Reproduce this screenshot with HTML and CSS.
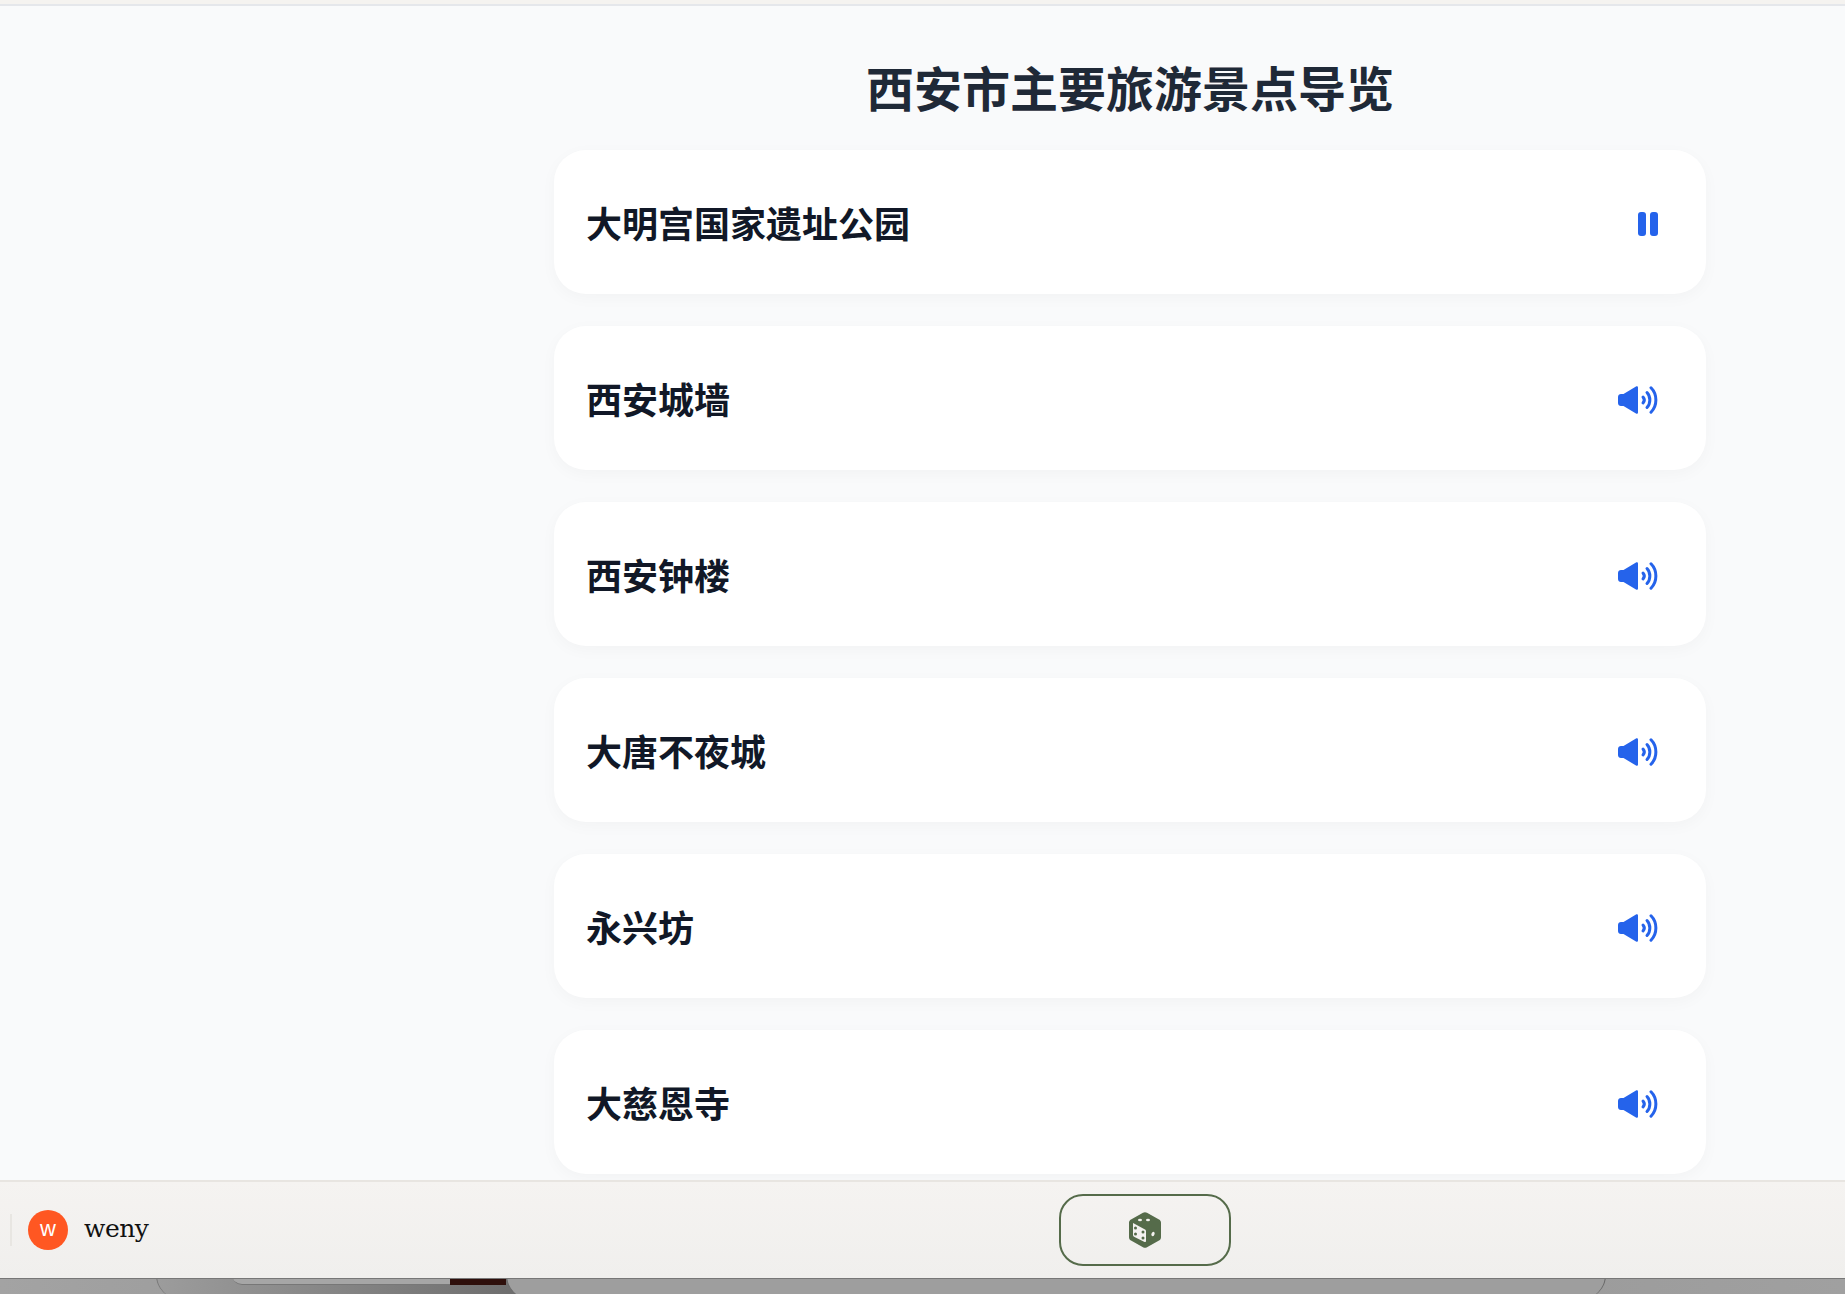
FILE: index.html
```html
<!DOCTYPE html>
<html lang="zh-CN">

<head>
    <meta charset="UTF-8">
    <title>西安市主要旅游景点导览</title>
    <link rel="stylesheet" href="styles.css">
</head>

<body>
<svg class="icon-defs" aria-hidden="true">
    <symbol id="speaker" viewBox="0 0 40 28">
        <path d="M3 8h2.500L18 .5c.9-.6 2-.1 2 1v25c0 1.100-1.100 1.600-2 1L5.500 20H3c-1.700 0-3-1.300-3-3v-6c0-1.700 1.300-3 3-3z" fill="currentColor"/>
        <path d="M25 11c1.600 1.800 1.600 4.200 0 6" fill="none" stroke="currentColor" stroke-width="3" stroke-linecap="round"/>
        <path d="M29 6.500c3.800 4 3.800 11 0 15" fill="none" stroke="currentColor" stroke-width="3" stroke-linecap="round"/>
        <path d="M33 1.800c6.500 6.500 6.500 18 0 24.400" fill="none" stroke="currentColor" stroke-width="3" stroke-linecap="round"/>
    </symbol>
</svg>

<div class="top-strip"></div>

<div class="page">
    <div class="sidebar"></div>
    <main class="content">
        <h1>西安市主要旅游景点导览</h1>

        <div class="spot">
            <span class="spot-name">大明宫国家遗址公园</span>
            <button class="play-btn">
                <svg class="pause-icon" viewBox="0 0 20 24"><rect x="0" y="0" width="8" height="24" rx="3"/><rect x="12" y="0" width="8" height="24" rx="3"/></svg>
            </button>
        </div>
        <div class="spot">
            <span class="spot-name">西安城墙</span>
            <button class="play-btn"><svg class="speaker-icon"><use href="#speaker"/></svg></button>
        </div>
        <div class="spot">
            <span class="spot-name">西安钟楼</span>
            <button class="play-btn"><svg class="speaker-icon"><use href="#speaker"/></svg></button>
        </div>
        <div class="spot">
            <span class="spot-name">大唐不夜城</span>
            <button class="play-btn"><svg class="speaker-icon"><use href="#speaker"/></svg></button>
        </div>
        <div class="spot">
            <span class="spot-name">永兴坊</span>
            <button class="play-btn"><svg class="speaker-icon"><use href="#speaker"/></svg></button>
        </div>
        <div class="spot">
            <span class="spot-name">大慈恩寺</span>
            <button class="play-btn"><svg class="speaker-icon"><use href="#speaker"/></svg></button>
        </div>
    </main>
</div>

<div class="bottom-bar">
    <div class="divider"></div>
    <div class="avatar">w</div>
    <span class="username">weny</span>
    <button class="dice-btn">
        <svg class="dice-icon" viewBox="0 0 32 36">
            <path d="M14 .8c1.300-.7 2.700-.7 4 0l12 6.700c1.300.7 2 1.900 2 3.300v14.400c0 1.400-.7 2.600-2 3.300l-12 6.700c-1.300.7-2.700.7-4 0L2 28.500C.7 27.800 0 26.600 0 25.200V10.800c0-1.400.7-2.600 2-3.300z" fill="#556b4a"/>
            <path d="M4.500 11.200l11.500 6.200c.6.300 1 1 1 1.700v9.900c0 .8-.7 1.200-1.400.9L5 24.800c-.7-.4-1-1-1-1.800V11.600c0-.4.200-.6.500-.4z" fill="#f4f2f0"/>
            <ellipse cx="11" cy="8" rx="2" ry="1.300" fill="#f4f2f0"/>
            <ellipse cx="19" cy="8" rx="2" ry="1.300" fill="#f4f2f0"/>
            <ellipse cx="24" cy="22" rx="1.500" ry="2.300" transform="rotate(25 24 22)" fill="#f4f2f0"/>
            <circle cx="6.500" cy="16" r="1.500" fill="#556b4a"/>
            <circle cx="14" cy="20" r="1.500" fill="#556b4a"/>
            <circle cx="6.500" cy="22" r="1.500" fill="#556b4a"/>
            <circle cx="14" cy="26" r="1.500" fill="#556b4a"/>
        </svg>
    </button>
</div>

<div class="desktop-strip">
    <div class="win win-back"></div>
    <div class="win win-tab"></div>
    <div class="win win-dark"></div>
    <div class="win win-main"></div>
</div>
</body>

</html>
```
FILE: styles.css
```css
html, body {
    height: 100%;
}

body {
    margin: 0;
    display: flex;
    flex-direction: column;
    height: 1294px;
    overflow: hidden;
    background-color: #fff;
    color: #111827;
    font-family: 'Noto Sans CJK SC', 'Noto Sans', sans-serif;
    padding-right: 1px;
    box-sizing: border-box;
}

.icon-defs {
    display: none;
}

.top-strip {
    height: 4px;
    flex-shrink: 0;
    background-color: #f5f3f0;
    border-bottom: 2px solid #e5e7eb;
}

.page {
    flex: 1;
    min-height: 0;
    display: flex;
    overflow: hidden;
    background-color: #f9fafb;
}

.sidebar {
    width: 414px;
    flex-shrink: 0;
}

.content {
    width: 1152px;
    margin-left: 140px;
    flex-shrink: 0;
}

h1 {
    margin: 0;
    padding-top: 44px;
    padding-bottom: 28px;
    text-align: center;
    font-size: 48px;
    line-height: 72px;
    font-weight: 700;
    color: #1f2937;
}

.spot {
    height: 144px;
    box-sizing: border-box;
    padding: 0 32px;
    margin-bottom: 32px;
    display: flex;
    align-items: center;
    justify-content: space-between;
    background-color: #fff;
    border-radius: 32px;
    box-shadow: 0 4px 16px rgba(0, 0, 0, 0.03);
}

.spot-name {
    font-size: 36px;
    line-height: 54px;
    font-weight: 700;
    color: #111827;
}

.play-btn {
    width: 72px;
    height: 56px;
    padding: 4px 16px 0;
    border: none;
    background: none;
    color: #2563eb;
    display: flex;
    align-items: center;
    justify-content: flex-end;
}

.pause-icon {
    width: 20px;
    height: 24px;
    fill: #2563eb;
}

.speaker-icon {
    width: 40px;
    height: 28px;
}

.bottom-bar {
    height: 96px;
    flex-shrink: 0;
    display: flex;
    align-items: center;
    padding-left: 10px;
    background: linear-gradient(#f5f3f1, #f0efed);
    border-top: 2px solid #e8e5e1;
    position: relative;
    z-index: 1;
}

.divider {
    width: 2px;
    height: 32px;
    background-color: #e8e6e2;
}

.avatar {
    width: 40px;
    height: 40px;
    margin-left: 16px;
    border-radius: 50%;
    background-color: #ff5722;
    color: #fff;
    font-family: 'Liberation Sans', sans-serif;
    font-size: 22px;
    line-height: 38px;
    text-align: center;
}

.username {
    margin-left: 16px;
    margin-bottom: 4px;
    font-family: 'DejaVu Serif', serif;
    font-size: 25px;
    letter-spacing: -0.5px;
    color: #111;
    width: 64px;
}

.dice-btn {
    width: 172px;
    height: 72px;
    margin-left: 911px;
    box-sizing: border-box;
    border: 2px solid #556b4a;
    border-radius: 24px;
    background: none;
    padding: 0;
    display: flex;
    align-items: center;
    justify-content: center;
}

.dice-icon {
    width: 32px;
    height: 36px;
}

.desktop-strip {
    height: 16px;
    flex-shrink: 0;
    position: relative;
    overflow: hidden;
    background: linear-gradient(90deg, #a3a3a3, #8f8f8f 40%, #a0a0a0);
    border-top: 1px solid #777;
    box-sizing: border-box;
}

.win {
    position: absolute;
    box-sizing: border-box;
}

.win-back {
    top: -14px;
    left: 156px;
    width: 360px;
    height: 34px;
    background: linear-gradient(90deg, #9c9c9c, #6e6e6e);
    border-left: 1px solid #777;
    border-radius: 0 0 0 24px;
}

.win-tab {
    top: -10px;
    left: 232px;
    width: 218px;
    height: 16px;
    background-color: #a6a6a6;
    border-bottom: 1px solid #777;
    border-radius: 0 0 0 10px;
}

.win-dark {
    top: -10px;
    left: 450px;
    width: 56px;
    height: 16px;
    background-color: #2e0f0b;
}

.win-main {
    top: -14px;
    left: 506px;
    width: 1100px;
    height: 34px;
    background-color: #9e9e9e;
    border-left: 1px solid #666;
    border-right: 1px solid #666;
    border-radius: 0 0 24px 24px;
}
```
